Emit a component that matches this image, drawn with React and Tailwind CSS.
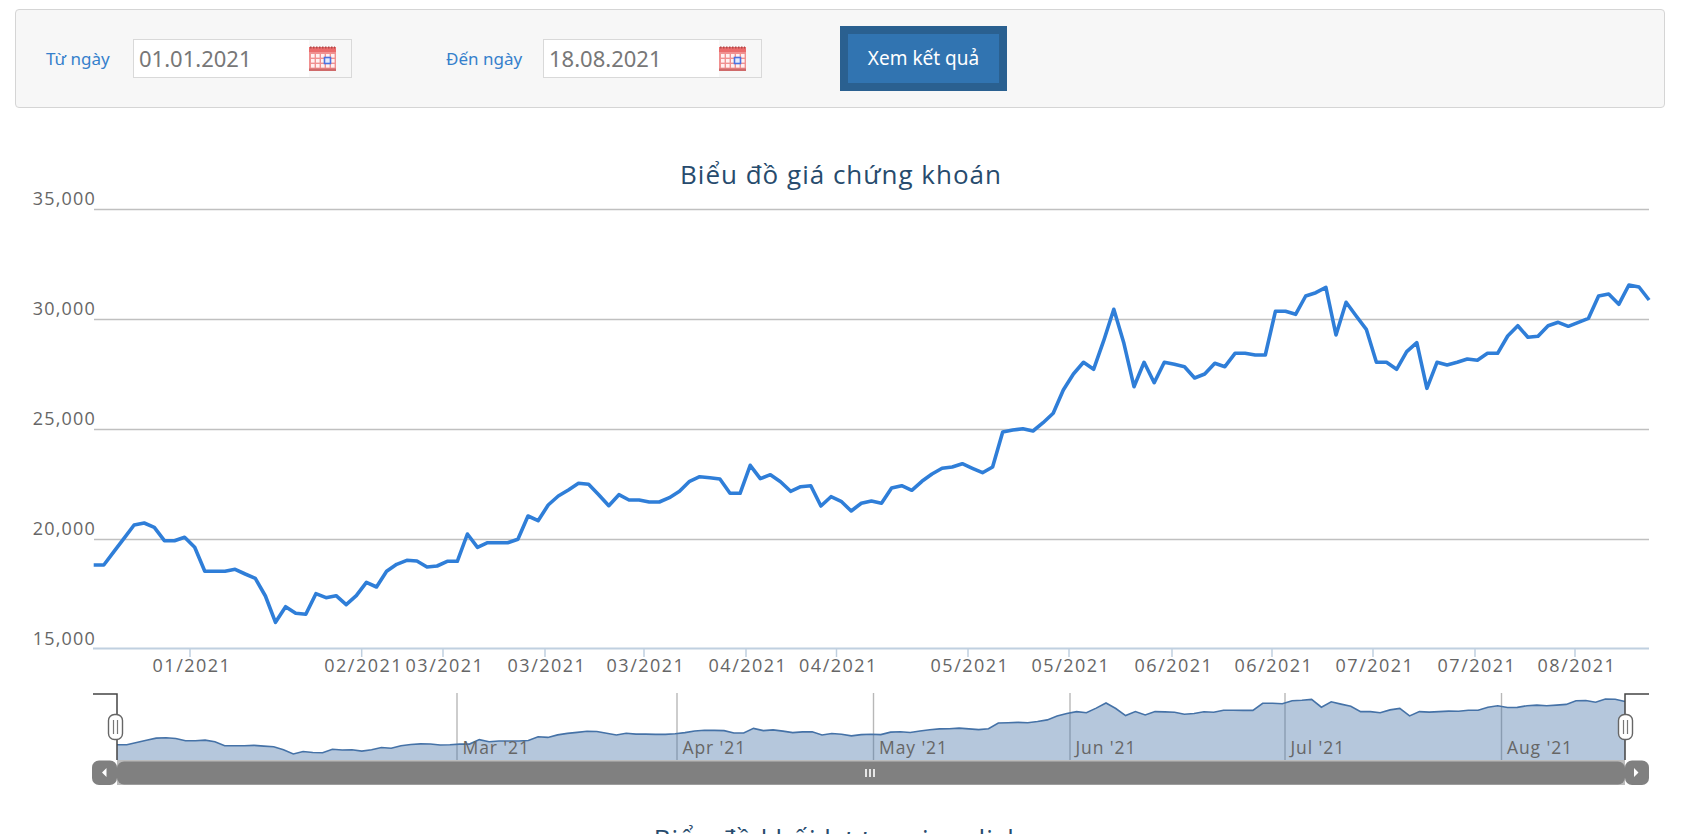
import React from "react";

const prices = [
  565, 565, 551.7, 538.3, 525, 523, 527.3, 540.7, 540.7, 537.3, 547.3, 571.3, 571.3, 571.3, 569.3, 574, 578.3, 596, 622.3, 606.7,
  613.3, 614.3, 593.7, 597.7, 595.7, 604.7, 595.7, 582.3, 587, 571.3, 564.3, 560.3, 561, 567, 566, 561.3, 561.3, 534, 547.3, 542.7,
  542.7, 542.7, 539.3, 516, 520.7, 505, 496, 490, 483.3, 484.3,
  494.7, 505.7, 494.7, 500, 500, 502, 502, 497.7, 491.3, 481.3, 476.7, 477.7, 479, 493.3, 493.3, 465.3, 478.7, 474.7, 481.7, 491.3,
  486.7, 485.7, 506, 496.7, 501.3, 511, 503.3, 501, 503.3, 488, 485.7, 490.3, 481.3, 474, 468.3, 467, 463.7, 468.3, 472.7, 467, 432, 430,
  428.7, 431, 422.7, 413.3, 390, 374, 362.3, 369.3, 340.7, 309.3, 343.3, 386.7, 362.3, 382.7, 362.3, 364.3, 366.7, 378, 374, 363.3,
  366.7, 353.3, 353.3, 355, 355, 311.3, 311.3, 314.3, 296, 292.7, 287.3, 335, 302.3, 316, 329.3, 362.3, 362.3, 369.3, 351.7, 342.7,
  388.3, 362.3, 365, 362.3, 359, 360.3, 353.3, 353.3, 336, 325.7, 337.3, 336.3, 325.7, 322.3, 326.3, 322.3, 318.3, 296, 294, 304.3,
  285, 287, 300,
];

const mainLine = prices.map((y, i) => `${(93.7 + i * 10.1).toFixed(1)},${y}`).join(" ");
const navPoints = prices.map((y, i) => [117 + (i / (prices.length - 1)) * 1508, 754 - (622.3 - y) * 0.163]);
const navLine = navPoints.map(([x, y]) => `${x.toFixed(1)},${y.toFixed(1)}`).join(" ");

const yAxis = [
  { label: "35,000", y: 209.5 },
  { label: "30,000", y: 319.5 },
  { label: "25,000", y: 429.5 },
  { label: "20,000", y: 539.5 },
];

const xTicks = [
  [190, "01/2021"],
  [361.7, "02/2021"],
  [443, "03/2021"],
  [545, "03/2021"],
  [644, "03/2021"],
  [746, "04/2021"],
  [836.5, "04/2021"],
  [968, "05/2021"],
  [1069, "05/2021"],
  [1172, "06/2021"],
  [1272, "06/2021"],
  [1373, "07/2021"],
  [1475, "07/2021"],
  [1575, "08/2021"],
];

const months = [
  [457, "Mar '21"],
  [677, "Apr '21"],
  [873.5, "May '21"],
  [1070, "Jun '21"],
  [1285, "Jul '21"],
  [1501.5, "Aug '21"],
];

const CalendarIcon = () => (
  <svg width="27" height="25" viewBox="0 0 27 25" className="shrink-0">
    <rect x="0" y="1" width="27" height="24" fill="#f09090" />
    <rect x="0" y="1" width="27" height="5" fill="#ea6b6b" />
    <line x1="1" y1="1.5" x2="26" y2="1.5" stroke="#b04848" strokeWidth="2" strokeDasharray="1.5 1.5" />
    <rect x="0" y="22.5" width="27" height="2.5" fill="#cf6a6a" />
    {[8, 13, 18].map((y) =>
      [2, 7, 12, 17, 22].map((x) => <rect key={`${x}-${y}`} x={x} y={y} width="3.6" height="3.6" fill="#fff0f0" />),
    )}
    <rect x="15.5" y="11.5" width="6" height="6" fill="#e4eafc" stroke="#4a72e0" strokeWidth="1.6" />
  </svg>
);

const DateField = ({ label, value, labelWidth }) => (
  <div className="flex items-center">
    <label className={`text-[17px] text-[#3580cc] ${labelWidth}`}>{label}</label>
    <div className="flex h-[39px] w-[219px] items-center justify-between border border-[#d9d9d9] bg-white">
      <span className="pl-[5px] text-[22px] text-[#777]">{value}</span>
      <div className="flex h-full w-[42px] items-center bg-[#f7f7f7]">
        <CalendarIcon />
      </div>
    </div>
  </div>
);

const Handle = ({ x }) => (
  <g>
    <rect x={x - 7} y="714.5" width="14" height="25" rx="6" fill="#fff" stroke="#666" strokeWidth="1.4" />
    <line x1={x - 2} y1="720" x2={x - 2} y2="734" stroke="#777" strokeWidth="1.2" />
    <line x1={x + 2} y1="720" x2={x + 2} y2="734" stroke="#777" strokeWidth="1.2" />
  </g>
);

const PriceChart = () => (
  <svg viewBox="0 108 1688 726" className="block h-[726px] w-[1688px] font-['Open_Sans',sans-serif]">
    <text x="841" y="184" textAnchor="middle" className="fill-[#274b6d] text-[26px] tracking-[1px]">
      Biểu đồ giá chứng khoán
    </text>

    {yAxis.map((t) => (
      <line key={t.y} x1="94" x2="1649" y1={t.y} y2={t.y} stroke="#c0c0c0" strokeWidth="1.5" />
    ))}
    {[...yAxis, { label: "15,000", y: 649.5 }].map((t) => (
      <text key={t.label} x="96" y={t.y - 5} textAnchor="end" className="fill-[#666] text-[18px] tracking-[1.2px]">
        {t.label}
      </text>
    ))}

    <line x1="93" x2="1649" y1="648.5" y2="648.5" stroke="#c0d0e0" strokeWidth="2" />
    {xTicks.map(([x, label], i) => (
      <g key={i}>
        <line x1={x} x2={x} y1="648" y2="657" stroke="#c0d0e0" strokeWidth="1.5" />
        <text x={x + 2} y="672" textAnchor="middle" className="fill-[#666] text-[18px] tracking-[1.5px]">
          {label}
        </text>
      </g>
    ))}

    <polyline points={mainLine} fill="none" stroke="#2f7ed8" strokeWidth="3.6" strokeLinejoin="round" />

    {/* navigator */}
    {months.map(([x]) => (
      <line key={x} x1={x} x2={x} y1="693" y2="760" stroke="#b8b8b8" strokeWidth="1.4" />
    ))}
    <polygon points={`117,760 ${navLine} 1625,760`} fill="#4572a7" fillOpacity="0.4" />
    <polyline points={navLine} fill="none" stroke="#4572a7" strokeWidth="1.6" />
    {months.map(([x, label]) => (
      <text key={label} x={x + 5.5} y="754" className="fill-[#666] text-[17.5px] tracking-[0.9px]">
        {label}
      </text>
    ))}
    <path d="M93 694H117V760M1649 694H1625V760" fill="none" stroke="#444" strokeWidth="1.5" />
    <Handle x={115.5} />
    <Handle x={1625.5} />

    {/* scrollbar */}
    <rect x="117" y="760" width="1508" height="25" fill="#bbb" />
    <rect x="92" y="760.5" width="25" height="24.5" rx="7" fill="#808080" />
    <rect x="1625" y="760.5" width="24" height="24.5" rx="7" fill="#808080" />
    <rect x="117" y="761.5" width="1508" height="23" rx="7" fill="#808080" />
    <path d="M106.5 768v9l-4.5-4.5zM1634 768v9l4.5-4.5z" fill="#fff" />
    <path d="M866 769v8M870 769v8M874 769v8" stroke="#fff" strokeWidth="1.6" />

    <text x="839" y="848" textAnchor="middle" className="fill-[#274b6d] text-[26px] tracking-[1px]">
      Biểu đồ khối lượng giao dịch
    </text>
  </svg>
);

const App = () => {
  return (
    <div className="h-[834px] w-full overflow-hidden bg-white pt-[9px] font-['Noto_Sans',sans-serif]">
      <div className="ml-[15px] flex h-[99px] w-[1650px] items-center rounded border border-[#d5d5d5] bg-[#f7f7f7] pl-[30px]">
        <DateField label="Từ ngày" value="01.01.2021" labelWidth="w-[87px]" />
        <div className="ml-[94px]">
          <DateField label="Đến ngày" value="18.08.2021" labelWidth="w-[97px]" />
        </div>
        <button className="ml-[78px] h-[65px] w-[167px] border-[8px] border-[#2a6090] bg-[#3174b1] text-[19px] text-white">
          Xem kết quả
        </button>
      </div>
      <PriceChart />
    </div>
  );
};

export default App;
